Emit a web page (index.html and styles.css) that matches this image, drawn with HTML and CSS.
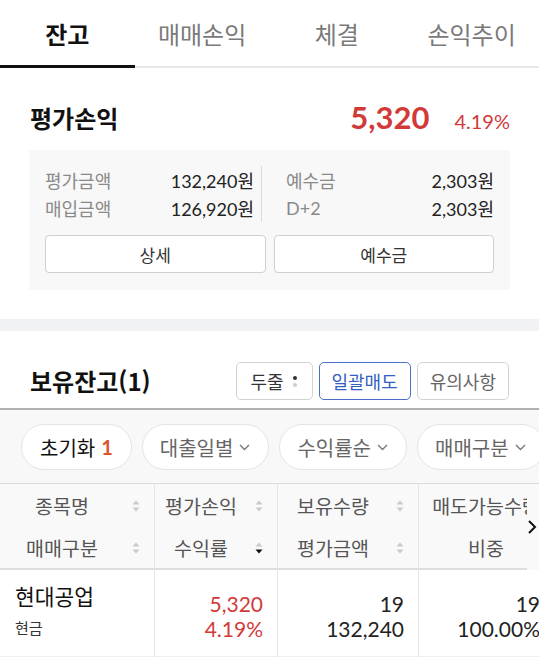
FILE: index.html
```html
<!DOCTYPE html>
<html lang="ko">
<head>
    <meta charset="UTF-8">
    <meta name="viewport" content="width=device-width, initial-scale=1.0">
    <title>잔고</title>
    <link rel="stylesheet" href="styles.css">
</head>
<body>
    <nav class="tabs">
        <div class="tab active">잔고</div>
        <div class="tab">매매손익</div>
        <div class="tab">체결</div>
        <div class="tab">손익추이</div>
    </nav>

    <section class="summary">
        <div class="summary-head">
            <h2 class="title">평가손익</h2>
            <div class="profit">
                <span class="profit-amount">5,320</span>
                <span class="profit-rate">4.19%</span>
            </div>
        </div>
        <div class="summary-box">
            <div class="summary-grid">
                <div class="summary-col left">
                    <div class="line"><span class="label">평가금액</span><span class="value">132,240원</span></div>
                    <div class="line"><span class="label">매입금액</span><span class="value">126,920원</span></div>
                </div>
                <div class="summary-col right">
                    <div class="line"><span class="label">예수금</span><span class="value">2,303원</span></div>
                    <div class="line"><span class="label num">D+2</span><span class="value">2,303원</span></div>
                </div>
            </div>
            <div class="summary-buttons">
                <button class="box-btn">상세</button>
                <button class="box-btn">예수금</button>
            </div>
        </div>
    </section>

    <div class="spacer"></div>

    <section class="holdings">
        <div class="holdings-head">
            <h2 class="title">보유잔고(1)</h2>
            <div class="head-buttons">
                <button class="small-btn">두줄
                    <svg class="toggle-dots" width="6" height="14" viewBox="0 0 6 14"><circle cx="3" cy="4" r="2" fill="#333"/><circle cx="3" cy="11" r="2" fill="#ccc"/></svg>
                </button>
                <button class="small-btn primary">일괄매도</button>
                <button class="small-btn">유의사항</button>
            </div>
        </div>

        <div class="filters">
            <div class="chip reset">초기화 <span class="count">1</span></div>
            <div class="chip">대출일별 <svg class="chev" width="11" height="7" viewBox="0 0 11 7"><path d="M1 1l4.5 4.5L10 1" fill="none" stroke="#777" stroke-width="1.4"/></svg></div>
            <div class="chip">수익률순 <svg class="chev" width="11" height="7" viewBox="0 0 11 7"><path d="M1 1l4.5 4.5L10 1" fill="none" stroke="#777" stroke-width="1.4"/></svg></div>
            <div class="chip">매매구분 <svg class="chev" width="11" height="7" viewBox="0 0 11 7"><path d="M1 1l4.5 4.5L10 1" fill="none" stroke="#777" stroke-width="1.4"/></svg></div>
        </div>

        <div class="grid-wrap">
            <div class="grid">
                <div class="hcell"><span>종목명</span><svg class="sort" width="8" height="12" viewBox="0 0 8 12"><path d="M4 0.5L7.5 4.5H0.5z" fill="#c9c9c9"/><path d="M4 11.5L7.5 7.5H0.5z" fill="#c9c9c9"/></svg></div>
                <div class="hcell"><span>평가손익</span><svg class="sort" width="8" height="12" viewBox="0 0 8 12"><path d="M4 0.5L7.5 4.5H0.5z" fill="#c9c9c9"/><path d="M4 11.5L7.5 7.5H0.5z" fill="#c9c9c9"/></svg></div>
                <div class="hcell"><span>보유수량</span><svg class="sort" width="8" height="12" viewBox="0 0 8 12"><path d="M4 0.5L7.5 4.5H0.5z" fill="#c9c9c9"/><path d="M4 11.5L7.5 7.5H0.5z" fill="#c9c9c9"/></svg></div>
                <div class="hcell last"><span>매도가능수량</span></div>

                <div class="hcell row2"><span>매매구분</span><svg class="sort" width="8" height="12" viewBox="0 0 8 12"><path d="M4 0.5L7.5 4.5H0.5z" fill="#c9c9c9"/><path d="M4 11.5L7.5 7.5H0.5z" fill="#c9c9c9"/></svg></div>
                <div class="hcell row2"><span>수익률</span><svg class="sort" width="8" height="12" viewBox="0 0 8 12"><path d="M4 0.5L7.5 4.5H0.5z" fill="#c9c9c9"/><path d="M4 11.5L7.5 7.5H0.5z" fill="#111"/></svg></div>
                <div class="hcell row2"><span>평가금액</span><svg class="sort" width="8" height="12" viewBox="0 0 8 12"><path d="M4 0.5L7.5 4.5H0.5z" fill="#c9c9c9"/><path d="M4 11.5L7.5 7.5H0.5z" fill="#c9c9c9"/></svg></div>
                <div class="hcell row2 last"><span>비중</span></div>

                <div class="dcell name">
                    <div class="stock">현대공업</div>
                    <div class="kind">현금</div>
                </div>
                <div class="dcell num red">
                    <div>5,320</div>
                    <div>4.19%</div>
                </div>
                <div class="dcell num">
                    <div>19</div>
                    <div>132,240</div>
                </div>
                <div class="dcell num last">
                    <div>19</div>
                    <div>100.00%</div>
                </div>
            </div>
            <div class="scroll-hint">
                <svg width="10" height="16" viewBox="0 0 10 16"><path d="M2 2l6 6-6 6" fill="none" stroke="#111" stroke-width="2"/></svg>
            </div>
        </div>
    </section>
</body>
</html>
```

FILE: styles.css
```css
* {
    box-sizing: border-box;
}

body {
    margin: 0;
    width: 539px;
    overflow: hidden;
    background: #fff;
    color: #111;
    font-family: Lato, "Noto Sans CJK KR", sans-serif;
}

h2 {
    margin: 0;
}

button {
    font-family: inherit;
    cursor: pointer;
}

/* tabs */
.tabs {
    display: grid;
    grid-template-columns: repeat(4, 1fr);
    border-bottom: 2px solid #e8e8e8;
}

.tab {
    height: 68px;
    padding: 4px 0 3px;
    margin-bottom: -2px;
    display: flex;
    align-items: center;
    justify-content: center;
    font-family: "Noto Sans CJK KR", sans-serif;
    font-size: 24px;
    color: #7a7a7a;
    border-bottom: 3px solid transparent;
}

.tab.active {
    color: #111;
    font-weight: 700;
    border-bottom-color: #111;
}

/* summary */
.summary {
    padding: 24px 29px 0;
}

.title {
    font-family: "Noto Sans CJK KR", sans-serif;
    font-size: 24px;
    font-weight: 700;
    color: #111;
}

.summary-head {
    height: 50px;
    display: flex;
    align-items: center;
    justify-content: space-between;
    padding-left: 1px;
    margin-bottom: 8px;
}

.profit {
    display: flex;
    align-items: baseline;
    gap: 25px;
    color: #d23a3a;
}

.profit-amount {
    font-size: 31px;
    font-weight: 700;
}

.profit-rate {
    font-size: 20px;
}

.summary-box {
    background: #f8f8f8;
    padding: 16px 16px 17px;
    height: 140px;
}

.summary-grid {
    display: flex;
}

.summary-col {
    display: flex;
    flex-direction: column;
}

.summary-col.left {
    width: 217px;
    padding-right: 7px;
    border-right: 1px solid #dcdcdc;
}

.summary-col.right {
    flex: 1;
    padding-left: 24px;
}

.line {
    height: 28px;
    display: flex;
    align-items: center;
    justify-content: space-between;
}

.label {
    font-family: "Noto Sans CJK KR", sans-serif;
    font-size: 18px;
    color: #8a8a8a;
}

.label.num {
    font-family: Lato, sans-serif;
    font-size: 18px;
}

.value {
    font-size: 18px;
    color: #222;
}

.summary-buttons {
    display: grid;
    grid-template-columns: 1fr 1fr;
    gap: 8px;
    margin-top: 13px;
}

.box-btn {
    height: 38px;
    background: #fff;
    border: 1px solid #cfcfcf;
    border-radius: 4px;
    font-family: "Noto Sans CJK KR", sans-serif;
    font-size: 17px;
    color: #333;
}

.spacer {
    height: 12px;
    margin-top: 29px;
    background: #f1f2f4;
}

/* holdings */
.holdings-head {
    display: flex;
    align-items: center;
    justify-content: space-between;
    padding: 31px 30px 8px;
    border-bottom: 2px solid #b0b0b0;
}

.holdings-head .title {
    line-height: 38px;
}

.head-buttons {
    display: flex;
    gap: 6px;
}

.small-btn {
    height: 38px;
    padding: 0 12px;
    background: #fff;
    border: 1px solid #d2d2d2;
    border-radius: 5px;
    font-family: "Noto Sans CJK KR", sans-serif;
    font-size: 18px;
    color: #555;
    display: flex;
    align-items: center;
    gap: 8px;
}

.small-btn:first-child {
    padding: 0 14px 0 13px;
    color: #333;
}

.small-btn.primary {
    border-color: #4a70cc;
    color: #3460c2;
}

.small-btn:last-child {
    color: #666;
}

/* filters */
.filters {
    display: flex;
    gap: 10px;
    padding: 14px 0 13px 21px;
    background: #f8f8f8;
    border-bottom: 1px solid #dadada;
    white-space: nowrap;
}

.chip {
    flex: none;
    height: 46px;
    padding: 0 18px 0 17px;
    display: flex;
    align-items: center;
    gap: 6px;
    background: #fff;
    border: 1px solid #e4e4e4;
    border-radius: 23px;
    font-family: "Noto Sans CJK KR", sans-serif;
    font-size: 20px;
    color: #666;
}

.chip.reset {
    color: #111;
    padding: 0 18px;
}

.chip .count {
    font-family: Lato, sans-serif;
    font-weight: 700;
    color: #d9572b;
}

/* table */
.grid-wrap {
    position: relative;
    overflow: hidden;
}

.grid {
    display: grid;
    grid-template-columns: 155px 123px 141px 141px;
    width: 560px;
}

.hcell {
    height: 43px;
    display: flex;
    align-items: center;
    padding-right: 14px;
    background: #f9f9f9;
    border-right: 1px solid #e6e6e6;
    font-family: "Noto Sans CJK KR", sans-serif;
    font-size: 19.5px;
    color: #555;
    white-space: nowrap;
}

.hcell.row2 {
    border-bottom: 2px solid #dedede;
}

.hcell span {
    flex: 1;
    text-align: center;
    padding-right: 8px;
}

.hcell.last {
    padding-right: 14px;
}

.hcell.last span {
    padding-right: 0;
    padding-left: 8px;
}

.sort {
    flex: none;
}

.dcell {
    height: 87px;
    border-right: 1px solid #e6e6e6;
    border-bottom: 1px solid #eeeeee;
}

.dcell.name {
    padding: 11px 0 0 15px;
    font-family: "Noto Sans CJK KR", sans-serif;
}

.stock {
    font-size: 21.5px;
    line-height: 30px;
    color: #111;
}

.kind {
    margin-top: 6px;
    font-size: 15px;
    line-height: 22px;
    color: #333;
}

.dcell.num {
    padding: 21px 14px 0 0;
    text-align: right;
    font-size: 21px;
    line-height: 25px;
    color: #222;
    white-space: nowrap;
}

.dcell.num.last {
    padding-right: 19px;
}

.dcell.red {
    color: #d23a3a;
}

.scroll-hint {
    position: absolute;
    top: 0;
    right: 0;
    width: 12px;
    height: 86px;
    background: #f9f9f9;
    display: flex;
    align-items: center;
    justify-content: flex-start;
}
```
